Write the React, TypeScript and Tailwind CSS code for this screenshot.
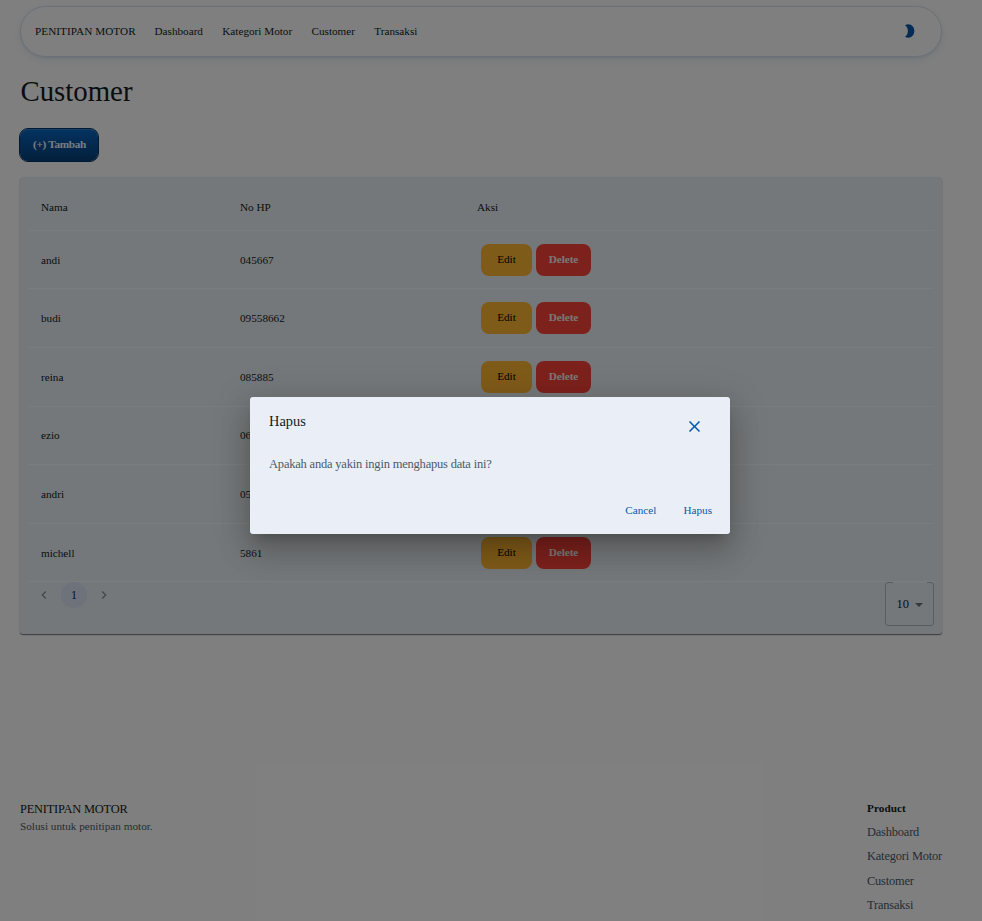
import React from "react";

const customers = [
  { name: "andi", phone: "045667" },
  { name: "budi", phone: "09558662" },
  { name: "reina", phone: "085885" },
  { name: "ezio", phone: "068574" },
  { name: "andri", phone: "058741" },
  { name: "michell", phone: "5861" },
];

const menu = ["Dashboard", "Kategori Motor", "Customer", "Transaksi"];

function NavBar() {
  return (
    <header className="mx-5 mt-[6px] flex h-[51px] w-[922px] items-center rounded-full border border-[#d3e0ee] pb-[2px] pl-[14px] pr-[24px] text-[11.2px] leading-4 text-[#131b20] shadow-[0_1px_2px_rgba(9,89,170,0.08),0_3px_9px_rgba(9,89,170,0.1)]">
      <span className="w-[119.5px] tracking-[0.06px]">PENITIPAN MOTOR</span>
      <nav className="flex flex-1 gap-[19.300px]">
        {menu.map((item) => (
          <a key={item}>{item}</a>
        ))}
      </nav>
      <svg viewBox="0 0 24 24" className="h-4 w-4 fill-[#0959aa]">
        <path d="M11 2c-1.820 0-3.530.5-5 1.350C8.500 5.080 10.300 8.300 10.300 12s-1.800 6.920-4.300 8.650C7.470 21.500 9.180 22 11 22c5.200 0 9-4.480 9-10S16.200 2 11 2z" />
      </svg>
    </header>
  );
}

function CustomerTable() {
  return (
    <section className="mx-5 mt-4 h-[457px] w-[922px] rounded-[3px] bg-[#eaf0f5] px-2 shadow-[0_1px_1px_rgba(0,0,0,0.45),0_1px_2px_rgba(0,0,0,0.15)]">
      <div className="flex h-[53.800px] items-center border-b border-[#f7f9fb] pl-[13px] pt-[8px] text-[11.2px]">
        <span className="w-[199px]">Nama</span>
        <span className="w-[237px]">No HP</span>
        <span>Aksi</span>
      </div>
      {customers.map((c) => (
        <div
          key={c.name}
          className="flex h-[58.600px] items-center border-b border-[#f7f9fb] pl-[13px] text-[11.2px] leading-4"
        >
          <span className="w-[199px]">{c.name}</span>
          <span className="w-[241px]">{c.phone}</span>
          <button className="mr-1 h-8 w-[51px] rounded-[8px] bg-[#ffb732] pb-[2px] text-black">Edit</button>
          <button className="h-8 w-[55px] rounded-[8px] bg-[#fb4338] pb-[2px] font-bold tracking-[-0.05px] text-[#f6eeee]">
            Delete
          </button>
        </div>
      ))}
      <div className="flex items-start justify-between">
        <div className="flex h-[26px] items-center pl-[8px] text-[#8a9196]">
          <svg viewBox="0 0 24 24" className="h-4 w-4 fill-current">
            <path d="M15.410 7.410L14 6l-6 6 6 6 1.410-1.410L10.830 12z" />
          </svg>
          <span className="mx-[9px] flex h-[26px] w-[26px] items-center justify-center rounded-full bg-[#dae5f7] text-[12px] text-[#131b20]">
            1
          </span>
          <svg viewBox="0 0 24 24" className="h-4 w-4 fill-current">
            <path d="M10 6L8.590 7.410 13.170 12l-4.580 4.590L10 18l6-6z" />
          </svg>
        </div>
        <fieldset className="relative flex h-[44px] w-[49px] items-center gap-[6px] rounded-[3px] border border-[#b4bac0] pl-[10.500px] text-[12.500px]">
          <span className="absolute -top-px left-[7px] h-px w-[34px] bg-[#f0f4f8]" />
          <span>10</span>
          <span className="mt-[2px] h-0 w-0 border-x-4 border-t-4 border-x-transparent border-t-[#6b7276]" />
        </fieldset>
      </div>
    </section>
  );
}

function Footer() {
  return (
    <footer className="mx-5 mt-[165px] flex w-[922px] justify-between text-[#4c5967]">
      <div className="pt-px">
        <p className="h-[18px] text-[12.400px] leading-[19px] tracking-[-0.2px] text-[#131b20]">PENITIPAN MOTOR</p>
        <p className="text-[11.2px] leading-[17px] tracking-[0.01px]">Solusi untuk penitipan motor.</p>
      </div>
      <div className="w-[75px] whitespace-nowrap text-[12.400px] tracking-[-0.17px]">
        <p className="h-[21px] text-[11.2px] font-bold leading-[19px] tracking-[0.08px] text-[#131b20]">Product</p>
        {menu.map((item) => (
          <p key={item} className="h-[24.400px] leading-[24px]">
            {item}
          </p>
        ))}
      </div>
    </footer>
  );
}

function DeleteDialog() {
  return (
    <div className="absolute inset-0 bg-black/50">
      <div
        role="dialog"
        className="absolute left-[250px] top-[397px] flex h-[137px] w-[480px] flex-col rounded-[3px] bg-[#eaeff7] shadow-[0_9px_12px_-6px_rgba(0,0,0,0.2),0_19px_30px_2px_rgba(0,0,0,0.14),0_7px_37px_6px_rgba(0,0,0,0.12)]"
      >
        <div className="flex h-[57px] justify-between pl-[19px] pr-[26px] pt-[14px]">
          <h2 className="text-[14.400px] leading-[21px] text-[#131b20]">Hapus</h2>
          <svg viewBox="0 0 24 24" className="mt-[6px] h-[19px] w-[19px] fill-[#0959aa]">
            <path d="M19 6.410L17.590 5 12 10.590 6.410 5 5 6.410 10.590 12 5 17.590 6.410 19 12 13.410 17.590 19 19 17.590 13.410 12z" />
          </svg>
        </div>
        <p className="flex-1 pl-[19px] text-[12.500px] leading-[20px] tracking-[-0.2px] text-[#4c5967]">
          Apakah anda yakin ingin menghapus data ini?
        </p>
        <div className="flex gap-[27px] self-end pb-[16px] pr-[18px] text-[11.2px] leading-4 text-[#0959aa]">
          <button>Cancel</button>
          <button>Hapus</button>
        </div>
      </div>
    </div>
  );
}

export default function App() {
  return (
    <div className="relative flex h-[921px] w-[982px] flex-col overflow-hidden bg-white font-['Liberation_Serif','Times_New_Roman',serif] text-[#131b20]">
      <NavBar />
      <h1 className="ml-[20.500px] mt-4 h-[36px] text-[28.800px] leading-[36px]">Customer</h1>
      <button className="ml-5 mt-5 h-[32px] w-[78px] rounded-[8px] bg-linear-to-b from-[#0a66c2] to-[#064079] pb-[2px] pl-[1px] text-[11.2px] font-bold tracking-[-0.3px] text-[#f0f7ff] shadow-[inset_0_1px_0_rgba(85,166,246,0.4)] outline outline-[#033363]">
        (+) Tambah
      </button>
      <CustomerTable />
      <Footer />
      <DeleteDialog />
    </div>
  );
}
